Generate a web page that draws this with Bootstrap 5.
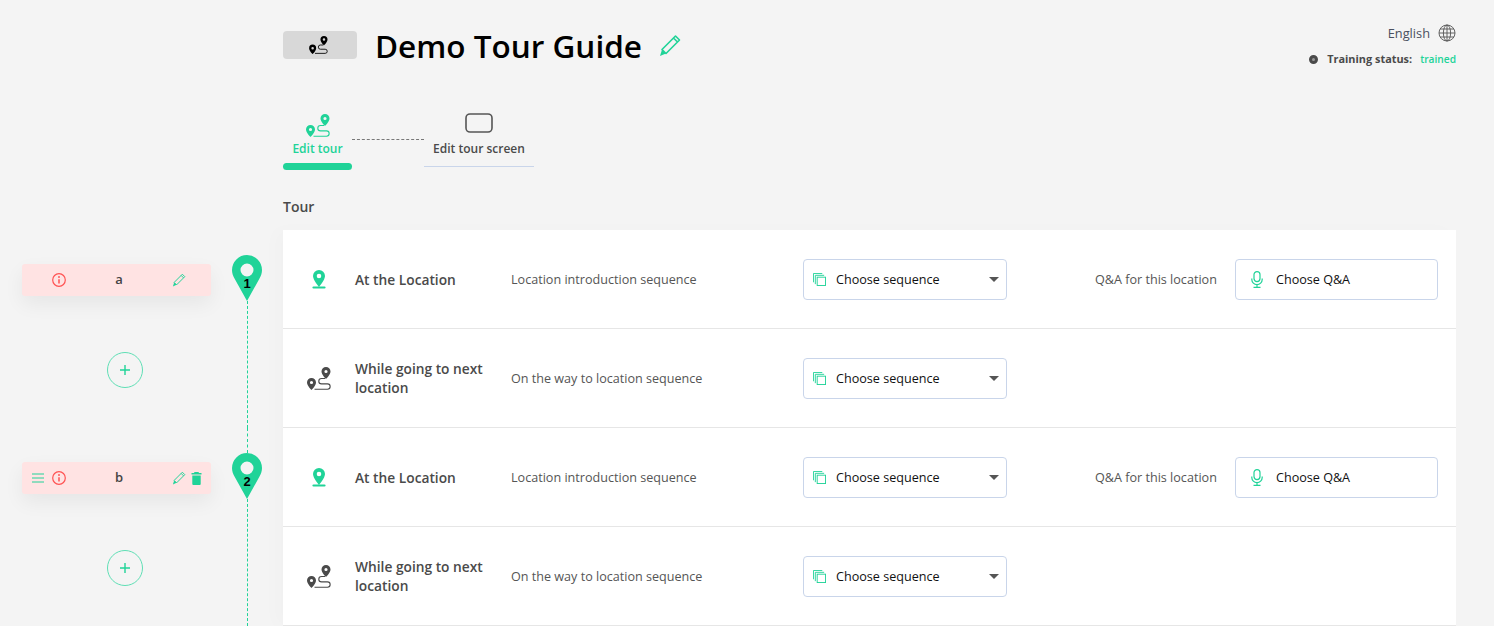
<!DOCTYPE html>
<html lang="en">
<head>
    <meta charset="UTF-8">
    <meta name="viewport" content="width=device-width, initial-scale=1.0">
    <title>Demo Tour Guide</title>
    <link href="https://cdn.jsdelivr.net/npm/bootstrap@5.3.0/dist/css/bootstrap.min.css" rel="stylesheet">
    <style>
        html, body {
            height: 626px;
            overflow: hidden;
        }
        body {
            background-color: #f4f4f4;
            font-family: "Open Sans", sans-serif;
            font-size: 12.6px;
            color: #4a4a4a;
        }
        .top-area {
            margin-left: 283px;
            margin-right: 38px;
            height: 230px;
        }
        .head-line {
            height: 90px;
        }
        .logo-box {
            width: 74px;
            height: 28px;
            margin-top: 31px;
            padding-right: 3px;
            background-color: #d8d8d8;
            border-radius: 4px;
        }
        .page-title {
            font-size: 31.5px;
            font-weight: 600;
            line-height: 44px;
            color: #000;
            margin: 24px 17px 0 18px;
        }
        .title-edit {
            margin-top: 34px;
        }
        .lang-line {
            margin-top: 24px;
            height: 18px;
            line-height: 18px;
            font-size: 12.8px;
            color: #4a5060;
        }
        .train-line {
            margin-top: 9px;
            font-size: 10.9px;
            font-weight: 700;
            line-height: 16px;
            color: #4a4a4a;
        }
        .train-state {
            font-size: 10.2px;
            font-weight: 600;
        }
        .status-dot {
            width: 9px;
            height: 9px;
            border-radius: 50%;
            border: 3px solid #4a4a4a;
            background-color: #999;
            margin-right: 9px;
        }
        .text-mint {
            color: #20d398;
        }
        .tab-line {
            height: 80px;
            margin-top: 19px;
        }
        .tour-tab {
            text-align: center;
            font-size: 12px;
            font-weight: 600;
            line-height: 18px;
        }
        .tab-one {
            width: 69px;
            height: 61px;
            color: #20d398;
        }
        .tab-two {
            width: 110px;
            height: 58px;
            color: #4a4a4a;
            border-bottom: 1px solid #c9d5ea;
        }
        .tab-pic {
            height: 31px;
            padding-top: 5px;
        }
        .tab-two .tab-pic {
            padding-top: 4px;
        }
        .tab-bar {
            height: 7px;
            margin-top: 5px;
            background-color: #20d398;
            border-radius: 4px;
        }
        .tab-dash {
            width: 72px;
            height: 1px;
            margin-top: 30px;
            border-top: 1px dashed #777;
        }
        .tour-label {
            margin-top: 8px;
            font-size: 14px;
            font-weight: 600;
            line-height: 20px;
        }
        .side-rail {
            width: 283px;
            flex: none;
        }
        .stop-block {
            height: 198px;
        }
        .stop-left {
            width: 232px;
        }
        .stop-tag {
            width: 189px;
            height: 32px;
            margin: 34px 0 0 22px;
            padding: 0 8px 0 10px;
            background-color: #ffe3e3;
            border-radius: 3px;
            box-shadow: 0 8px 20px rgba(0, 0, 0, .06);
        }
        .tag-name {
            font-size: 13px;
            font-weight: 600;
            color: #444;
        }
        .tag-start {
            width: 34px;
        }
        .tag-end {
            width: 31px;
            gap: 5px;
        }
        .add-stop {
            width: 36px;
            height: 36px;
            margin: 56px 0 0 107px;
            padding: 0;
            border: 1.5px solid #5fdfb5;
            border-radius: 50%;
            background: transparent;
        }
        .pin-col {
            width: 30px;
        }
        .pin-lead {
            height: 25px;
            flex: none;
            width: 0;
            border-left: 1px dashed #20d398;
        }
        .pin-lead.is-first {
            border-left: 0;
        }
        .pin-mark {
            width: 30px;
            height: 46px;
            flex: none;
        }
        .pin-num {
            position: absolute;
            left: 0;
            right: 0;
            top: 21px;
            text-align: center;
            font-family: "Liberation Sans", sans-serif;
            font-size: 13px;
            font-weight: 700;
            line-height: 16px;
            color: #000;
        }
        .pin-line {
            flex: 1;
            width: 0;
            border-left: 1px dashed #20d398;
        }
        .tour-panel {
            width: 1173px;
            height: 396px;
            background-color: #fff;
            box-shadow: -8px 0 16px rgba(0, 0, 0, .015);
        }
        .tour-row {
            height: 99px;
            border-bottom: 1px solid #e6e6e6;
        }
        .row-pic {
            width: 72px;
        }
        .row-name {
            width: 156px;
            font-size: 13.75px;
            font-weight: 600;
            line-height: 19px;
            color: #4a4a4a;
        }
        .row-desc {
            width: 292px;
            padding-top: 2px;
            color: #555;
        }
        .pick-box {
            width: 204px;
            height: 41px;
            padding: 0 7px 0 9px;
            font-size: 12.6px;
            color: #111;
            background-color: #fff;
            border: 1px solid #c9d5ea;
            border-radius: 4px;
        }
        .pick-box.dropdown-toggle::after {
            margin-left: auto;
            color: #555;
            border-top-width: 5px;
            border-right-width: 5px;
            border-left-width: 5px;
        }
        .pick-box:hover {
            background-color: #fff;
            border-color: #c9d5ea;
            color: #111;
        }
        .pick-text {
            margin-left: 10px;
            padding-top: 2px;
        }
        .qa-side {
            margin-left: 88px;
        }
        .qa-label {
            width: 140px;
            padding-top: 2px;
            color: #555;
        }
        .qa-box {
            width: 203px;
            padding-left: 15px;
        }
        .qa-box .pick-text {
            margin-left: 13px;
        }
    </style>
</head>
<body>
    <svg width="0" height="0" class="position-absolute">
        <defs>
            <symbol id="route" viewBox="0 0 24 23">
                <path d="M4.500 11a4.500 4.500 0 0 0-4.500 4.500C0 18.800 4.500 23 4.500 23S9 18.800 9 15.500A4.500 4.500 0 0 0 4.500 11zm0 2.900a1.600 1.600 0 1 1 0 3.200 1.600 1.600 0 0 1 0-3.200z" fill="currentColor" fill-rule="evenodd"/>
                <path d="M19 0a4.500 4.500 0 0 0-4.500 4.500C14.500 7.800 19 12 19 12s4.500-4.200 4.500-7.500A4.500 4.500 0 0 0 19 0zm0 2.900a1.600 1.600 0 1 1 0 3.200 1.600 1.600 0 0 1 0-3.200z" fill="currentColor" fill-rule="evenodd"/>
                <path d="M18 11.500h-3.500a2.700 2.700 0 0 0 0 5.400h6a2.600 2.600 0 0 1 0 5.300H7.500" fill="none" stroke="currentColor" stroke-width="1.100"/>
            </symbol>
            <symbol id="pencil" viewBox="0 0 22 23">
                <path d="M16.500 2l4 4L7 19.500l-4-4z M14.500 4l4 4" fill="none" stroke="currentColor" stroke-width="1.600" stroke-linejoin="round"/>
                <path d="M3 15.500L1 22l6-2.500z" fill="currentColor"/>
            </symbol>
            <symbol id="copies" viewBox="0 0 14 14">
                <rect x="4.500" y="4.500" width="9" height="9" fill="none" stroke="currentColor"/>
                <path d="M2.500 12V2.500H12M.5 10V.5H10" fill="none" stroke="currentColor"/>
            </symbol>
            <symbol id="spot" viewBox="0 0 14 19">
                <path d="M7 0a6 6 0 0 0-6 6c0 4 6 11 6 11s6-7 6-11a6 6 0 0 0-6-6zm0 3.700a2.300 2.300 0 1 1 0 4.600 2.300 2.300 0 0 1 0-4.600z" fill="currentColor" fill-rule="evenodd"/>
                <path d="M1.500 17.500h11" stroke="currentColor" stroke-width="2.200" stroke-linecap="round"/>
            </symbol>
            <symbol id="mic" viewBox="0 0 12 17">
                <rect x="3" y=".6" width="6" height="10" rx="3" fill="none" stroke="currentColor" stroke-width="1.200"/>
                <path d="M.8 7.500v1a5.200 5.200 0 0 0 10.400 0v-1M6 13.700v2.700M2.500 16.400h7" fill="none" stroke="currentColor" stroke-width="1.200"/>
            </symbol>
            <symbol id="info" viewBox="0 0 14 14">
                <circle cx="7" cy="7" r="6.300" fill="none" stroke="currentColor" stroke-width="1.200"/>
                <path d="M7 6.200v4.300" stroke="currentColor" stroke-width="1.500"/>
                <circle cx="7" cy="4" r=".95" fill="currentColor"/>
            </symbol>
            <symbol id="bigpin" viewBox="0 0 30 46">
                <path d="M15 0A15 15 0 0 0 0 15c0 3 1 6 2.500 8.500L15 46l12.500-22.500C29 21 30 18 30 15A15 15 0 0 0 15 0zm0 8.500a6.500 6.500 0 1 1 0 13 6.500 6.500 0 0 1 0-13z" fill="#20d398" fill-rule="evenodd"/>
            </symbol>
        </defs>
    </svg>

    <div class="top-area">
        <div class="head-line d-flex align-items-start">
            <div class="logo-box d-flex align-items-center justify-content-center text-black">
                <svg width="21" height="18"><use href="#route"/></svg>
            </div>
            <h1 class="page-title">Demo Tour Guide</h1>
            <svg class="title-edit text-mint" width="22" height="23"><use href="#pencil"/></svg>
            <div class="ms-auto d-flex flex-column align-items-end">
                <div class="lang-line d-flex align-items-center">
                    <span>English</span>
                    <svg class="ms-2" width="18" height="18" viewBox="0 0 18 18" fill="none" stroke="#555" stroke-width=".9">
                        <circle cx="9" cy="9" r="8"/>
                        <ellipse cx="9" cy="9" rx="3.600" ry="8"/>
                        <path d="M9 1v16M1 9h16M2 5h14M2 13h14"/>
                    </svg>
                </div>
                <div class="train-line d-flex align-items-center">
                    <span class="status-dot"></span>
                    <span class="me-2">Training status:</span>
                    <span class="train-state text-mint">trained</span>
                </div>
            </div>
        </div>

        <div class="tab-line d-flex align-items-start">
            <div class="tour-tab tab-one">
                <div class="tab-pic"><svg class="d-block mx-auto" width="24" height="23"><use href="#route"/></svg></div>
                <div>Edit tour</div>
                <div class="tab-bar"></div>
            </div>
            <div class="tab-dash"></div>
            <div class="tour-tab tab-two">
                <div class="tab-pic">
                    <svg class="d-block mx-auto" width="28" height="21" viewBox="0 0 28 21" fill="none" stroke="#555" stroke-width="1.600"><rect x="1" y="1" width="26" height="18" rx="4"/></svg>
                </div>
                <div>Edit tour screen</div>
            </div>
        </div>
        <div class="tour-label">Tour</div>
    </div>

    <div class="d-flex">
        <div class="side-rail">
            <div class="stop-block d-flex">
                <div class="stop-left">
                    <div class="stop-tag d-flex align-items-center">
                        <div class="tag-start d-flex align-items-center justify-content-end">
                            <svg width="14" height="14" style="color:#ff5252"><use href="#info"/></svg>
                        </div>
                        <div class="tag-name flex-grow-1 text-center">a</div>
                        <div class="tag-end d-flex align-items-center">
                            <svg class="text-mint" width="14" height="14"><use href="#pencil"/></svg>
                        </div>
                    </div>
                    <button class="add-stop d-flex align-items-center justify-content-center" type="button">
                        <svg width="10" height="10" viewBox="0 0 10 10" stroke="#20d398" stroke-width="1.400"><path d="M5 0v10M0 5h10"/></svg>
                    </button>
                </div>
                <div class="pin-col d-flex flex-column align-items-center">
                    <div class="pin-lead is-first"></div>
                    <div class="pin-mark position-relative">
                        <svg class="d-block" width="30" height="46"><use href="#bigpin"/></svg>
                        <span class="pin-num">1</span>
                    </div>
                    <div class="pin-line"></div>
                </div>
            </div>
            <div class="stop-block d-flex">
                <div class="stop-left">
                    <div class="stop-tag d-flex align-items-center">
                        <div class="tag-start d-flex align-items-center justify-content-between">
                            <svg class="text-mint" width="12" height="10" viewBox="0 0 12 10" stroke="currentColor"><path d="M0 1h12M0 5h12M0 9h12"/></svg>
                            <svg width="14" height="14" style="color:#ff5252"><use href="#info"/></svg>
                        </div>
                        <div class="tag-name flex-grow-1 text-center">b</div>
                        <div class="tag-end d-flex align-items-center">
                            <svg class="text-mint flex-none" width="14" height="14"><use href="#pencil"/></svg>
                            <svg class="text-mint" width="11" height="13" viewBox="0 0 10 13" fill="currentColor"><path d="M3 0h4l.5 1H10v1.500H0V1h2.500zM.8 3.500h8.400V12a1 1 0 0 1-1 1H1.800a1 1 0 0 1-1-1z"/></svg>
                        </div>
                    </div>
                    <button class="add-stop d-flex align-items-center justify-content-center" type="button">
                        <svg width="10" height="10" viewBox="0 0 10 10" stroke="#20d398" stroke-width="1.400"><path d="M5 0v10M0 5h10"/></svg>
                    </button>
                </div>
                <div class="pin-col d-flex flex-column align-items-center">
                    <div class="pin-lead"></div>
                    <div class="pin-mark position-relative">
                        <svg class="d-block" width="30" height="46"><use href="#bigpin"/></svg>
                        <span class="pin-num">2</span>
                    </div>
                    <div class="pin-line"></div>
                </div>
            </div>
        </div>

        <div class="tour-panel">
            <div class="tour-row d-flex align-items-center">
                <div class="row-pic text-center text-mint"><svg width="14" height="19"><use href="#spot"/></svg></div>
                <div class="row-name">At the Location</div>
                <div class="row-desc">Location introduction sequence</div>
                <button class="btn pick-box d-flex align-items-center dropdown-toggle" type="button">
                    <svg width="13" height="13" class="text-mint"><use href="#copies"/></svg>
                    <span class="pick-text">Choose sequence</span>
                </button>
                <div class="qa-side d-flex align-items-center">
                    <div class="qa-label">Q&amp;A for this location</div>
                    <button class="btn pick-box qa-box d-flex align-items-center" type="button">
                        <svg width="12" height="17" class="text-mint"><use href="#mic"/></svg>
                        <span class="pick-text">Choose Q&amp;A</span>
                    </button>
                </div>
            </div>
            <div class="tour-row d-flex align-items-center">
                <div class="row-pic text-center"><svg width="24" height="23"><use href="#route"/></svg></div>
                <div class="row-name">While going to next location</div>
                <div class="row-desc">On the way to location sequence</div>
                <button class="btn pick-box d-flex align-items-center dropdown-toggle" type="button">
                    <svg width="13" height="13" class="text-mint"><use href="#copies"/></svg>
                    <span class="pick-text">Choose sequence</span>
                </button>
            </div>
            <div class="tour-row d-flex align-items-center">
                <div class="row-pic text-center text-mint"><svg width="14" height="19"><use href="#spot"/></svg></div>
                <div class="row-name">At the Location</div>
                <div class="row-desc">Location introduction sequence</div>
                <button class="btn pick-box d-flex align-items-center dropdown-toggle" type="button">
                    <svg width="13" height="13" class="text-mint"><use href="#copies"/></svg>
                    <span class="pick-text">Choose sequence</span>
                </button>
                <div class="qa-side d-flex align-items-center">
                    <div class="qa-label">Q&amp;A for this location</div>
                    <button class="btn pick-box qa-box d-flex align-items-center" type="button">
                        <svg width="12" height="17" class="text-mint"><use href="#mic"/></svg>
                        <span class="pick-text">Choose Q&amp;A</span>
                    </button>
                </div>
            </div>
            <div class="tour-row d-flex align-items-center">
                <div class="row-pic text-center"><svg width="24" height="23"><use href="#route"/></svg></div>
                <div class="row-name">While going to next location</div>
                <div class="row-desc">On the way to location sequence</div>
                <button class="btn pick-box d-flex align-items-center dropdown-toggle" type="button">
                    <svg width="13" height="13" class="text-mint"><use href="#copies"/></svg>
                    <span class="pick-text">Choose sequence</span>
                </button>
            </div>
        </div>
    </div>

    <script src="https://cdn.jsdelivr.net/npm/bootstrap@5.3.0/dist/js/bootstrap.bundle.min.js"></script>
</body>
</html>
